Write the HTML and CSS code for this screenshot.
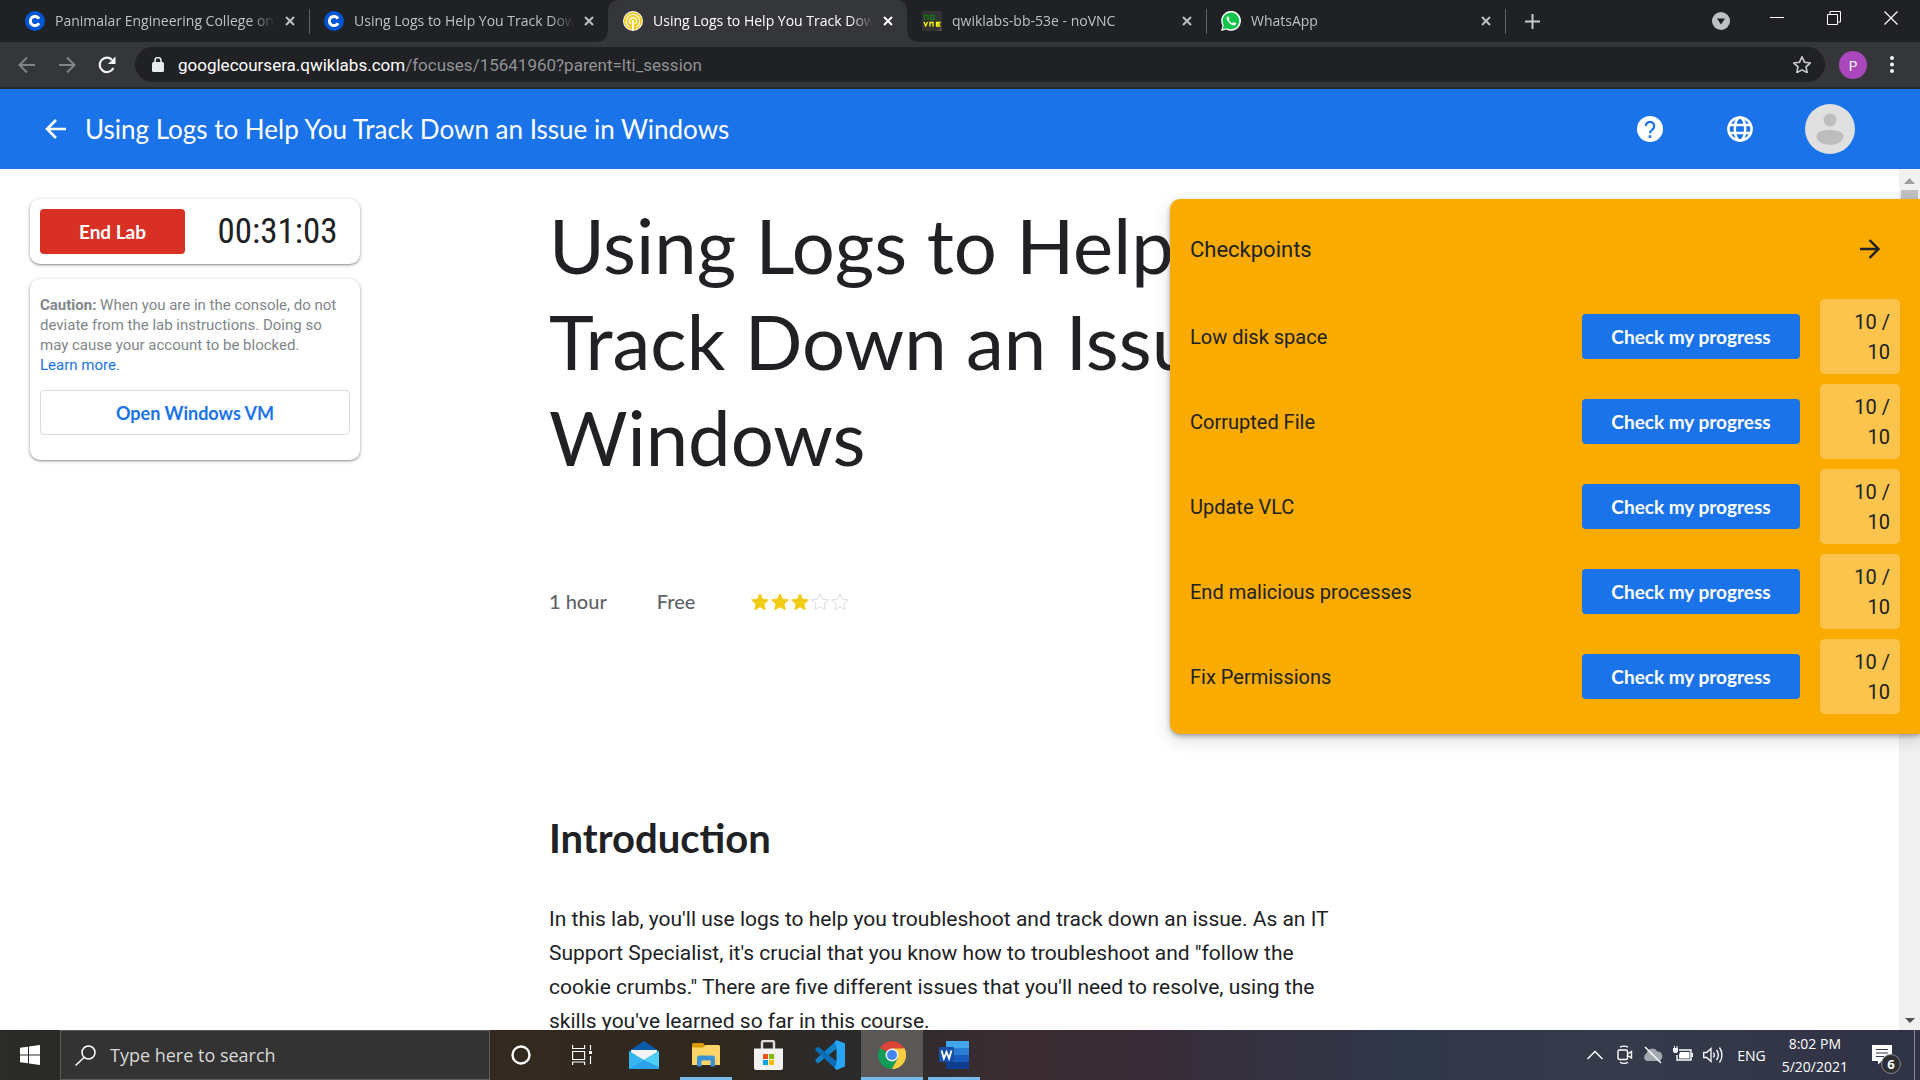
FILE: index.html
```
<!DOCTYPE html>
<html lang="en">
<head>
<meta charset="utf-8">
<meta name="viewport" content="width=device-width, initial-scale=1">
<title>Using Logs to Help You Track Down an Issue in Windows</title>
<link rel="stylesheet" href="styles.css">
</head>
<body>
<div class="screen">
  <svg class="sprite" aria-hidden="true">
    <symbol id="i-close" viewBox="0 0 10 10"><path d="M1 1l8 8M9 1L1 9" fill="none" stroke="currentColor" stroke-width="2"/></symbol>
    <symbol id="i-coursera" viewBox="0 0 20 20"><circle cx="10" cy="10" r="10" fill="#0056d2"/><path d="M14 12.2a4.6 4.6 0 1 1 0-4.4" fill="none" stroke="#fff" stroke-width="3"/></symbol>
    <symbol id="i-star" viewBox="0 0 18 17"><path d="M9 0.8l2.5 5.4 5.9.7-4.4 4 1.2 5.8L9 13.8l-5.2 2.9L5 10.900.6 6.900l5.900-.7z"/></symbol>
  </svg>

  <nav class="tabstrip" aria-label="Browser tabs">
    <div class="tab tab-divided">
      <svg class="favicon"><use href="#i-coursera"/></svg>
      <a class="tab-title" href="#">Panimalar Engineering College on</a>
      <button class="tab-close" aria-label="Close tab"><svg><use href="#i-close"/></svg></button>
    </div>
    <div class="tab">
      <svg class="favicon"><use href="#i-coursera"/></svg>
      <a class="tab-title" href="#">Using Logs to Help You Track Dow</a>
      <button class="tab-close" aria-label="Close tab"><svg><use href="#i-close"/></svg></button>
    </div>
    <div class="tab tab-active">
      <svg class="favicon" viewBox="0 0 20 20"><circle cx="10" cy="10" r="10" fill="#fff"/><circle cx="10" cy="10" r="9" fill="#f2c811"/><path d="M7 16.200a6.800 6.800 0 1 1 6 0" fill="none" stroke="#fff" stroke-width="1.200"/><path d="M8 13a3.600 3.600 0 1 1 4 0" fill="none" stroke="#fff" stroke-width="1.500"/><path d="M10 9v10" stroke="#fff" stroke-width="2"/></svg>
      <a class="tab-title" href="#" aria-current="page">Using Logs to Help You Track Dow</a>
      <button class="tab-close" aria-label="Close tab"><svg><use href="#i-close"/></svg></button>
    </div>
    <div class="tab tab-divided">
      <svg class="favicon" viewBox="0 0 20 20"><rect width="20" height="20" rx="2" fill="#333"/><path d="M20 15v5h-5z" fill="#4a4a4a"/><path d="M2.500 9V4.500H6V9M8.500 4.500H12V8.500H8.500z" fill="none" stroke="#0a7d0a" stroke-width="1.200"/><path d="M2 11l1.700 4L5.500 11M8 15.500V11.500H11V15.500M18.500 11.500H14.500V15H18.500M14.500 13.200H18" fill="none" stroke="#ff0" stroke-width="1.300"/></svg>
      <a class="tab-title" href="#">qwiklabs-bb-53e - noVNC</a>
      <button class="tab-close" aria-label="Close tab"><svg><use href="#i-close"/></svg></button>
    </div>
    <div class="tab tab-divided">
      <svg class="favicon" viewBox="0 0 20 20"><path d="M0 20l1.500-5.200A9.900 9.900 0 1 1 5.300 18.500z" fill="#fff"/><path d="M1.700 18.300l1.100-3.900a8.400 8.400 0 1 1 2.900 2.800z" fill="#12c44a"/><path d="M6.800 5.200c-1.500.8-1.500 2.700-.3 4.600 1.600 2.600 3.900 4.300 6.100 4.600 1.300.1 2.500-.7 2.500-2.200l-2.400-1.200-1.200 1.300c-1.700-.7-2.900-1.900-3.700-3.400l.9-1.200z" fill="#fff"/></svg>
      <a class="tab-title" href="#">WhatsApp</a>
      <button class="tab-close" aria-label="Close tab"><svg><use href="#i-close"/></svg></button>
    </div>
    <button class="chrome-btn new-tab" aria-label="New tab"><svg width="15" height="15" viewBox="0 0 15 15"><path d="M7.500 0v15M0 7.500h15" stroke="#c8cacd" stroke-width="2"/></svg></button>
    <div class="window-controls">
      <button class="chrome-btn search-tabs" aria-label="Search tabs"><svg width="18" height="18" viewBox="0 0 18 18"><circle cx="9" cy="9" r="9" fill="#bdc1c6"/><path d="M5 6.500h8L9 12.500z" fill="#202124"/></svg></button>
      <button class="chrome-btn" aria-label="Minimize"><svg width="14" height="14" viewBox="0 0 14 14"><path d="M0 6.500h14" stroke="#fff"/></svg></button>
      <button class="chrome-btn" aria-label="Restore"><svg width="14" height="14" viewBox="0 0 14 14"><path d="M.5 3.500h10v10H.5zM3 3.500V.5h10.500V11H11" fill="none" stroke="#fff"/></svg></button>
      <button class="chrome-btn" aria-label="Close"><svg width="14" height="14" viewBox="0 0 14 14"><path d="M.5.5l13 13M13.500.5l-13 13" stroke="#fff" stroke-width="1.200"/></svg></button>
    </div>
  </nav>

  <div class="toolbar">
    <button class="tool-btn" aria-label="Back"><svg viewBox="0 0 18 18"><path d="M17 9H2M9 1.500L1.500 9 9 16.500" fill="none" stroke="#808388" stroke-width="2"/></svg></button>
    <button class="tool-btn" aria-label="Forward"><svg viewBox="0 0 18 18"><path d="M1 9h15M9 1.500L16.500 9 9 16.500" fill="none" stroke="#808388" stroke-width="2"/></svg></button>
    <button class="tool-btn" aria-label="Reload"><svg viewBox="0 0 18 18"><path d="M15.400 12A7.200 7.200 0 1 1 14 3.800" fill="none" stroke="#f1f3f4" stroke-width="2.200"/><path d="M17.500.5v7.500H10z" fill="#f1f3f4"/></svg></button>
    <div class="omnibox">
      <svg width="12" height="15" viewBox="0 0 12 15"><rect x="0" y="5" width="12" height="10" rx="1.500" fill="#e8eaed"/><path d="M3 6V3.500a3 3 0 0 1 6 0V6" fill="none" stroke="#e8eaed" stroke-width="1.600"/></svg>
      <div class="url"><span class="url-host">googlecoursera.qwiklabs.com</span>/focuses/15641960?parent=lti_session</div>
      <button class="chrome-btn bookmark" aria-label="Bookmark this tab"><svg width="18" height="17" fill="none" stroke="#c8cacd" stroke-width="1.600"><use href="#i-star"/></svg></button>
    </div>
    <button class="profile" aria-label="Profile">P</button>
    <button class="chrome-btn menu" aria-label="Menu"><svg width="4" height="17" viewBox="0 0 4 17" fill="#f1f3f4"><circle cx="2" cy="2" r="2"/><circle cx="2" cy="8.500" r="2"/><circle cx="2" cy="15" r="2"/></svg></button>
  </div>

  <header class="lab-header">
    <a class="back-link" href="#" aria-label="Back"><svg width="22" height="20" viewBox="0 0 22 20"><path d="M21 10H2M11 1L2 10l9 9" fill="none" stroke="#fff" stroke-width="2.600"/></svg></a>
    <div class="lab-name">Using Logs to Help You Track Down an Issue in Windows</div>
    <button class="header-btn" aria-label="Help"><svg width="26" height="26" viewBox="0 0 26 26"><circle cx="13" cy="13" r="13" fill="#fff"/><path d="M8.800 10a4.200 4.200 0 1 1 7 3.200c-1.800 1.400-2.800 2.100-2.800 4.100" fill="none" stroke="#1a73e8" stroke-width="2.200"/><path d="M11.700 19.300h2.600v2.600h-2.600z" fill="#1a73e8"/></svg></button>
    <button class="header-btn" aria-label="Language"><svg width="26" height="26" viewBox="0 0 26 26"><g fill="none" stroke="#fff" stroke-width="2.500"><circle cx="13" cy="13" r="11.600"/><ellipse cx="13" cy="13" rx="5.200" ry="11.600"/><path d="M2.500 9h21M2.500 17h21"/></g></svg></button>
    <button class="header-btn" aria-label="Account"><svg width="50" height="50" viewBox="0 0 50 50"><circle cx="25" cy="25" r="25" fill="#e0e0e0"/><circle cx="25" cy="16" r="6.500" fill="#bdbdbd"/><path d="M11.500 32.500c0-4.500 6-6.500 13.500-6.500s13.500 2 13.500 6.500S32 41 25 41s-13.500-4-13.500-8.500z" fill="#bdbdbd"/></svg></button>
  </header>

  <main class="lab">
    <aside class="lab-side">
      <section class="card timer-card">
        <button class="btn btn-red">End Lab</button>
        <time class="timer">00:31:03</time>
      </section>
      <section class="card">
        <p class="caution"><strong>Caution:</strong> When you are in the console, do not<br>deviate from the lab instructions. Doing so<br>may cause your account to be blocked.<br><a href="#">Learn more.</a></p>
        <button class="btn btn-outline">Open Windows VM</button>
      </section>
    </aside>

    <article class="lab-body">
      <h1>Using Logs to Help You Track Down an Issue in Windows</h1>
      <div class="meta">
        <span class="meta-item">1 hour</span>
        <span class="meta-item">Free</span>
        <span class="stars" role="img" aria-label="Rated 3 out of 5">
          <svg class="star star-on"><use href="#i-star"/></svg>
          <svg class="star star-on"><use href="#i-star"/></svg>
          <svg class="star star-on"><use href="#i-star"/></svg>
          <svg class="star"><use href="#i-star"/></svg>
          <svg class="star"><use href="#i-star"/></svg>
        </span>
      </div>
      <h2>Introduction</h2>
      <p class="intro">In this lab, you'll use logs to help you troubleshoot and track down an issue. As an IT Support Specialist, it's crucial that you know how to troubleshoot and "follow the cookie crumbs." There are five different issues that you'll need to resolve, using the skills you've learned so far in this course.</p>
    </article>

    <div class="scrollbar" aria-hidden="true">
      <svg width="21" height="21" viewBox="0 0 21 21"><path d="M5 15l5.500-6 5.500 6z" fill="#a0a0a0"/></svg>
      <span class="thumb"></span>
      <svg width="21" height="21" viewBox="0 0 21 21"><path d="M6 9h10l-5 5z" fill="#505050"/></svg>
    </div>

    <section class="checkpoints">
      <div class="checkpoints-head">
        <span>Checkpoints</span>
        <button class="collapse" aria-label="Collapse"><svg width="20" height="20" viewBox="0 0 20 20"><path d="M0 10h18M9.500 1l9 9-9 9" fill="none" stroke="#202124" stroke-width="2.400"/></svg></button>
      </div>
      <ul class="checks">
        <li><span class="check-name">Low disk space</span><button class="btn btn-blue">Check my progress</button><span class="score">10 / 10</span></li>
        <li><span class="check-name">Corrupted File</span><button class="btn btn-blue">Check my progress</button><span class="score">10 / 10</span></li>
        <li><span class="check-name">Update VLC</span><button class="btn btn-blue">Check my progress</button><span class="score">10 / 10</span></li>
        <li><span class="check-name">End malicious processes</span><button class="btn btn-blue">Check my progress</button><span class="score">10 / 10</span></li>
        <li><span class="check-name">Fix Permissions</span><button class="btn btn-blue">Check my progress</button><span class="score">10 / 10</span></li>
      </ul>
    </section>
  </main>

  <footer class="taskbar">
    <button class="task start" aria-label="Start"><svg width="20" height="20" viewBox="0 0 20 20" fill="#fff"><path d="M0 2.800l8-1.100v7.800H0zM9 1.500L20 0v9.500H9zM0 10.500h8v7.800l-8-1.100zM9 10.500h11V20L9 18.500z"/></svg></button>
    <label class="search">
      <svg width="21" height="21" viewBox="0 0 21 21"><circle cx="13.500" cy="7.500" r="6.500" fill="none" stroke="#fff" stroke-width="1.500"/><path d="M9 12.500L.5 20.500" stroke="#fff" stroke-width="1.500"/></svg>
      <input type="text" placeholder="Type here to search" aria-label="Type here to search">
    </label>
    <button class="task cortana" aria-label="Cortana"><svg width="20" height="20" viewBox="0 0 20 20"><circle cx="10" cy="10" r="8.500" fill="none" stroke="#fff" stroke-width="2.400"/></svg></button>
    <button class="task" aria-label="Task View"><svg width="21" height="20" viewBox="0 0 21 20"><path d="M.6 0v3.500h12V0M.6 6.500h12v8H.6zM.6 20v-3h12v3M18.500 0v5M18.500 11v8" fill="none" stroke="#fff" stroke-width="1.200"/><path d="M17 6h3v3h-3z" fill="#fff"/></svg></button>
    <button class="task" aria-label="Mail"><svg width="30" height="28" viewBox="0 0 30 28"><path d="M0 10L15 0l15 10v4H0z" fill="#0a5cab"/><path d="M2 9h26v8L15 24 2 17z" fill="#f3f3f3"/><path d="M0 10l15 9 15-9v18H0z" fill="#35b5ef"/><path d="M0 28L30 10v18z" fill="#2ba3e6"/><path d="M15 19l15-9v16z" fill="#50d0f8"/></svg></button>
    <button class="task task-open" aria-label="File Explorer"><svg width="28" height="24" viewBox="0 0 28 24"><path d="M0 1.500A1.500 1.500 0 0 1 1.500 0H11l3 3v3H0z" fill="#dc9b00"/><path d="M0 4.500h11L14 2h12.500A1.500 1.500 0 0 1 28 3.500V22H0z" fill="#ffd567"/><path d="M5 23.500V15a2.500 2.500 0 0 1 2.500-2.500h13A2.500 2.500 0 0 1 23 15v8.500h-4.500v-6h-9v6z" fill="#3d93d5"/></svg></button>
    <button class="task" aria-label="Microsoft Store"><svg width="29" height="30" viewBox="0 0 29 30"><path d="M8 9V2.500A1.500 1.500 0 0 1 9.500 1h9A1.500 1.500 0 0 1 20 2.500V9" fill="none" stroke="#ddd" stroke-width="2.400"/><path d="M0 8.500h29V28a2 2 0 0 1-2 2H2a2 2 0 0 1-2-2z" fill="#f2f2f2"/><path d="M9 14h5v5H9z" fill="#f25022"/><path d="M15 14h5v5h-5z" fill="#7fba00"/><path d="M9 20h5v5H9z" fill="#00a4ef"/><path d="M15 20h5v5h-5z" fill="#ffb900"/></svg></button>
    <button class="task" aria-label="Visual Studio Code"><svg width="30" height="30" viewBox="0 0 30 30"><path d="M22 0L.5 19.500v2L3 23.500 22.500 8z" fill="#1180c8"/><path d="M22 30L.5 10.500v-2L3 6.500 22.500 22z" fill="#0a6cb5"/><path d="M21.500 0L30 3.500v23L21.500 30z" fill="#27a5f2"/><path d="M22 0l-2.500 2.500L22.500 8v14l-3 5.500L22 30z" fill="#27a5f2"/></svg></button>
    <button class="task task-open task-current" aria-label="Google Chrome"><svg width="28" height="28" viewBox="0 0 28 28"><path d="M14 14L1.900 7A14 14 0 0 1 26.100 7z" fill="#db4437"/><path d="M14 14L26.100 7A14 14 0 0 1 14 28z" fill="#ffcd40"/><path d="M14 14l6 3.500L14 28A14 14 0 0 1 1.900 7z" fill="#0f9d58"/><path d="M14 7.500h12.400A14 14 0 0 1 14 28l6-10.500z" fill="#ffcd40"/><circle cx="14" cy="14" r="6.500" fill="#f1f1f1"/><circle cx="14" cy="14" r="5" fill="#4285f4"/></svg></button>
    <button class="task task-open" aria-label="Word"><svg width="30" height="28" viewBox="0 0 30 28"><path d="M7 0h23v7H7z" fill="#41a5ee"/><path d="M7 7h23v7H7z" fill="#2b7cd3"/><path d="M7 14h23v7H7z" fill="#185abd"/><path d="M7 21h23v7H7z" fill="#103f91"/><rect y="6" width="15" height="15" rx="1" fill="#174ea8"/><path d="M2.500 9.500l2.400 8L7.500 11l2.600 6.500 2.400-8" fill="none" stroke="#fff" stroke-width="1.800"/></svg></button>
    <div class="tray">
      <svg width="16" height="20" viewBox="0 0 16 20"><path d="M.5 14L8 6.500l7.500 7.500" fill="none" stroke="#fff" stroke-width="1.500"/></svg>
      <svg width="16" height="20" viewBox="0 0 16 20" fill="none" stroke="#fff" stroke-width="1.400"><rect x="1" y="5" width="9.500" height="9.500" rx="1.500"/><path d="M10.500 9l4-2.500v6.500l-4-2.500M3 2.200c2-1.400 6-1.400 8 0M3 17.300c2 1.400 6 1.400 8 0"/></svg>
      <svg width="20" height="20" viewBox="0 0 20 20"><path d="M4 16a4 4 0 0 1-.5-7.500A6 6 0 0 1 14.500 6.500 5 5 0 0 1 16.500 16z" fill="#a4a8b0"/><path d="M2 2l16 16" stroke="#fff" stroke-width="1.500"/></svg>
      <svg width="20" height="20" viewBox="0 0 20 20"><path d="M6 5h12v10H4V10" fill="none" stroke="#fff" stroke-width="1.400"/><path d="M7 7h9.500v6.500H6V10z" fill="#fff"/><path d="M18.500 8h1.500v4h-1.500zM0 3h5v3.500L3.500 8h-2L0 6.500zM1 1h1v2H1zM3.500 1h1v2h-1z" fill="#fff"/></svg>
      <svg width="20" height="20" viewBox="0 0 20 20" fill="none" stroke="#fff" stroke-width="1.300"><path d="M.7 7.500h3L8 3.500v13l-4.300-4h-3zM10.500 7.500c1 1.500 1 3.500 0 5M13.500 5c2.200 3 2.200 7 0 10M16.500 2.500c3.300 4.500 3.300 10.500 0 15"/></svg>
      <span>ENG</span>
      <time class="clock">8:02 PM<br>5/20/2021</time>
      <button class="notify" aria-label="Notifications"><svg width="20" height="20" viewBox="0 0 20 20"><path d="M0 0h20v16H10l-4 3.500V16H0z" fill="#fff"/><path d="M4 4.500h12M4 8h12M4 11.500h8" stroke="#33384a" stroke-width="1.200"/></svg><span class="badge">6</span></button>
    </div>
  </footer>
</div>
</body>
</html>
```
FILE: styles.css
```
:root {
  --ui: "Open Sans", "Noto Sans", sans-serif;
  --text: Roboto, sans-serif;
  --display: Lato, sans-serif;
  --blue: #1a73e8;
  --ink: #202124;
}
* { box-sizing: border-box; }
body { margin: 0; color: var(--ink); font-family: var(--text); }
button { margin: 0; padding: 0; border: 0; background: none; color: inherit; font: inherit; }
a { color: inherit; text-decoration: none; }
svg { display: block; flex: none; }
.sprite { position: absolute; width: 0; height: 0; }
.screen { display: flex; flex-direction: column; height: 100vh; overflow: hidden; }

/* Tabs */
.tabstrip { display: flex; flex: none; height: 42px; padding: 0 1px 0 10px; background: #202124; font: 14px/20px var(--ui); color: #bdc1c6; }
.tab { position: relative; display: flex; align-items: center; flex: 0 1 299px; min-width: 0; gap: 10px; padding: 0 14px 0 15px; }
.favicon { width: 20px; height: 20px; }
.tab-title { flex: 1; min-width: 0; overflow: hidden; white-space: nowrap; -webkit-mask: linear-gradient(to left, transparent, #000 24px); mask: linear-gradient(to left, transparent, #000 24px); }
.tab-close { width: 10px; height: 10px; }
.tab-close svg { width: 10px; height: 10px; }
.tab-divided::after { content: ""; position: absolute; right: -1px; top: 9px; width: 1px; height: 25px; background: #5f6368; }
.tab-active { background: #35363a; border-radius: 10px 10px 0 0; color: #fff; }
.tab-active::before, .tab-active::after { content: ""; position: absolute; bottom: 0; width: 10px; height: 10px; }
.tab-active::before { left: -10px; background: radial-gradient(circle at 0 0, transparent 9px, #35363a 10px); }
.tab-active::after { right: -10px; background: radial-gradient(circle at 100% 0, transparent 9px, #35363a 10px); }
.chrome-btn { display: flex; align-items: center; justify-content: center; flex: none; }
.new-tab { width: 46px; margin-left: 4px; }
.window-controls { display: flex; margin-left: auto; }
.window-controls .chrome-btn { width: 57px; height: 36px; }
.window-controls .search-tabs { width: 55px; height: 42px; }

/* Toolbar */
.toolbar { display: flex; align-items: center; flex: none; height: 47px; padding: 0 15px 0 18px; background: #35363a; border-bottom: 2px solid #27282a; }
.tool-btn { width: 18px; height: 18px; margin-right: 22px; }
.tool-btn svg { width: 18px; height: 18px; }
.tool-btn:nth-child(3) { margin-right: 19px; }
.omnibox { display: flex; align-items: center; flex: 1; height: 35px; padding: 0 14px 0 17px; gap: 14px; border-radius: 18px; background: #202124; }
.url { flex: 1; color: #909397; font: 17px/24px var(--text); white-space: nowrap; }
.url-host { color: #fff; }
.profile { width: 28px; height: 28px; margin: 0 12px 0 14px; border-radius: 50%; background: #ab47bc; color: #fff; font: 15px/28px var(--ui); }
.menu { width: 26px; height: 28px; }

/* Lab header */
.lab-header { display: flex; align-items: center; flex: none; height: 80px; padding: 0 65px 0 45px; background: var(--blue); }
.lab-name { flex: 1; margin-left: 18px; color: #fff; font: 26px/32px var(--display); }
.header-btn { margin-left: 64px; }
.header-btn:last-child { margin-left: 52px; }

/* Lab content */
.lab { position: relative; display: grid; grid-template-columns: minmax(360px, 1fr) minmax(0, 822px) 1fr; flex: 1; align-items: start; min-height: 0; overflow: hidden; background: #fff; }
.lab-side { display: grid; gap: 15px; width: 360px; padding: 30px 0 0 30px; }
.card { padding: 10px; border-radius: 10px; background: #fff; box-shadow: 0 1px 2px rgba(60, 64, 67, .5), 0 1px 5px rgba(60, 64, 67, .2); }
.btn { height: 45px; border-radius: 4px; font: 700 19px/24px var(--display); }
.btn-red { width: 145px; background: #d93025; color: #fff; }
.btn-outline { width: 100%; border: 1px solid #dadce0; background: #fff; color: var(--blue); font-size: 18px; }
.btn-blue { width: 218px; background: var(--blue); color: #fff; }
.timer-card { display: flex; align-items: center; height: 65px; }
.timer { flex: 1; padding-left: 20px; font: 35px/44px "Roboto Condensed", var(--text); text-align: center; }
.caution { margin: 6px 0 15px; color: #80868b; font-size: 15px; line-height: 20px; }
.caution a { color: var(--blue); }
.card:last-child { padding-bottom: 25px; }
h1, h2, p, ul { margin: 0; }
h1 { padding-top: 28px; font: 400 76px/96px var(--display); }
.meta { display: flex; align-items: center; margin-top: 101px; color: #5f6368; font: 500 20px/30px var(--display); }
.meta-item { margin-right: 50px; }
.stars { display: flex; gap: 2px; margin-left: 6px; }
.star { width: 18px; height: 17px; fill: none; stroke: #dadce0; }
.star-on { fill: #f2cb13; stroke: #f2cb13; }
h2 { margin-top: 198px; font: 700 40px/48px var(--display); }
.intro { max-width: 800px; margin-top: 40px; font-size: 21px; line-height: 34px; }

.scrollbar { position: absolute; top: 0; right: 0; bottom: 0; display: flex; flex-direction: column; width: 21px; background: #f1f1f1; }
.thumb { width: 17px; height: 20px; margin: 0 2px auto; background: #c1c1c1; }

/* Checkpoints panel */
.checkpoints { position: absolute; top: 30px; right: 0; width: 750px; padding: 0 20px 20px; border-radius: 10px 0 0 10px; background: #f9ab00; box-shadow: 0 2px 4px rgba(60, 64, 67, .4), 0 6px 16px rgba(60, 64, 67, .2); }
.checkpoints-head { display: flex; align-items: center; justify-content: space-between; height: 100px; font-size: 22px; }
.collapse { margin-right: 20px; }
.checks { display: grid; gap: 10px; padding: 0; list-style: none; }
.checks li { display: flex; align-items: center; gap: 20px; font-size: 20px; line-height: 30px; }
.check-name { flex: 1; }
.score { width: 80px; padding: 8px 10px 7px 30px; border-radius: 5px; background: #fbc44c; text-align: right; }

/* Taskbar */
.taskbar { display: flex; flex: none; height: 50px; background: linear-gradient(90deg, #2a2c27 0, #2b2a26 60px, #33291f 490px, #30281f 720px, #2b2a2b 860px, #3c2d31 1020px, #382d39 1160px, #30374a 1400px, #353b4a 1620px, #303246 1920px); color: #fff; font: 14px/23px var(--ui); }
.task { position: relative; display: flex; align-items: center; justify-content: center; flex: none; width: 62px; height: 50px; }
.start { width: 60px; }
.cortana { width: 61px; }
.task-open::after { content: ""; position: absolute; right: 5px; bottom: 0; left: 5px; height: 3px; background: #76b9ed; }
.task-current { background: #5a5856; }
.task-current::after { right: 0; left: 0; }
.search { display: flex; align-items: center; flex: 0 1 430px; min-width: 0; gap: 14px; padding-left: 14px; border: 1px solid #5c5c5c; background: #333; }
.search input { flex: 1; min-width: 0; padding: 0; border: 0; outline: 0; background: none; color: #fff; font: 18px/24px var(--ui); }
.search input::placeholder { color: #d8d8d8; opacity: 1; }
.tray { display: flex; align-items: center; gap: 10px; margin-left: auto; margin-right: 5px; border-right: 1px solid #8b8d97; }
.tray svg:first-child { margin-right: 4px; }
.tray > span { margin-left: 4px; }
.clock { margin-left: 6px; text-align: center; }
.notify { position: relative; margin: 0 22px 0 14px; }
.notify svg:first-child { margin: 0; }
.badge { position: absolute; top: 9px; left: 9px; width: 20px; height: 20px; border: 1px solid #85858a; border-radius: 50%; background: #2e2f33; font: 700 13px/18px var(--ui); text-align: center; }
```
